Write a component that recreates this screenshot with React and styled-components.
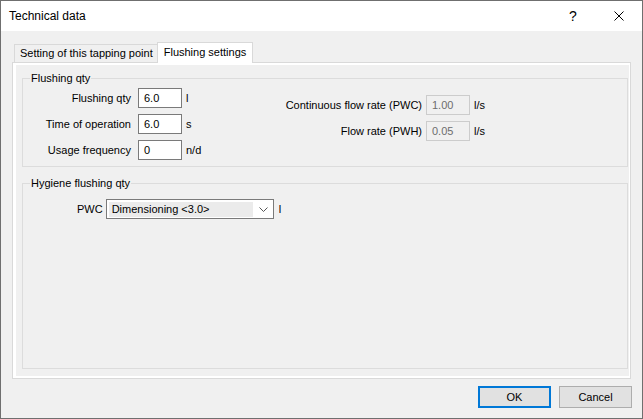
import React from "react";
import styled, { createGlobalStyle } from "styled-components";

const Global = createGlobalStyle`
  html, body { margin: 0; padding: 0; background: #f0f0f0; }
  * { box-sizing: border-box; }
`;

const Window = styled.div`
  width: 643px;
  height: 419px;
  border: 1px solid #6f6f6f;
  background: #f0f0f0;
  display: flex;
  flex-direction: column;
  font-family: "Liberation Sans", Arial, sans-serif;
  font-size: 11px;
  color: #000;
  overflow: hidden;
`;

const TitleBar = styled.div`
  height: 30px;
  flex: none;
  background: #fff;
  display: flex;
  align-items: center;
  padding-left: 8px;
`;

const Title = styled.div`
  flex: 1;
  font-size: 12px;
`;

const CaptionButton = styled.div`
  width: 46px;
  height: 30px;
  display: flex;
  align-items: center;
  justify-content: center;
  font-size: 14px;
  color: #000;
`;

const Body = styled.div`
  flex: 1;
  display: flex;
  flex-direction: column;
  padding: 11px 11px 0 11px;
`;

const TabStrip = styled.div`
  height: 20px;
  display: flex;
  align-items: flex-end;
  padding-left: 2px;
  position: relative;
  z-index: 1;
`;

const Tab = styled.div`
  height: ${(p) => (p.$active ? "21px" : "18px")};
  margin-bottom: ${(p) => (p.$active ? "-1px" : "0")};
  margin-left: ${(p) => (p.$active ? "-1px" : "0")};
  padding: ${(p) => (p.$active ? "3px 6px 0 6px" : "2px 4px 0 5px")};
  border: 1px solid #d9d9d9;
  border-bottom: none;
  background: ${(p) => (p.$active ? "#fff" : "#f0f0f0")};
  white-space: nowrap;
  line-height: 13px;
`;

const Panel = styled.div`
  height: 317px;
  border: 1px solid #d9d9d9;
  background: #fff;
  padding: 2px 1px 2px 3px;
  display: flex;
`;

const Page = styled.div`
  flex: 1;
  background: #f0f0f0;
  padding: 13px 1px 7px 6px;
  display: flex;
  flex-direction: column;
  gap: 16px;
`;

const Group = styled.div`
  position: relative;
  border: 1px solid #dcdcdc;
  height: ${(p) => (p.$h ? `${p.$h}px` : "auto")};
  flex: ${(p) => (p.$grow ? 1 : "none")};
`;

const GroupTitle = styled.div`
  position: absolute;
  top: -8px;
  left: 7px;
  padding: 0 1px;
  background: #f0f0f0;
  line-height: 14px;
`;

const FlushRow = styled.div`
  display: flex;
  align-items: flex-start;
`;

const FieldGrid = styled.div`
  display: grid;
  grid-template-columns: ${(p) => p.$cols};
  grid-auto-rows: 20px;
  row-gap: 6px;
  align-items: center;
  margin-top: ${(p) => p.$top}px;
  margin-left: ${(p) => p.$left || 0}px;
`;

const Label = styled.div`
  text-align: right;
  white-space: nowrap;
  padding-right: ${(p) => p.$gap}px;
`;

const Input = styled.div`
  width: 44px;
  height: 20px;
  border: 1px solid ${(p) => (p.$disabled ? "#cccccc" : "#7a7a7a")};
  background: ${(p) => (p.$disabled ? "#f0f0f0" : "#fff")};
  color: ${(p) => (p.$disabled ? "#6d6d6d" : "#000")};
  padding-left: 5px;
  display: flex;
  align-items: center;
`;

const Unit = styled.div`
  white-space: nowrap;
  padding-left: 4px;
`;

const ComboRow = styled.div`
  display: flex;
  align-items: center;
  margin-top: 15px;
  margin-left: 54px;
`;

const ComboLabel = styled.div`
  margin-right: 3px;
`;

const Combo = styled.div`
  width: 168px;
  height: 20px;
  border: 1px solid #7a7a7a;
  background: #fff;
  display: flex;
  align-items: center;
  padding: 2px;
`;

const ComboText = styled.div`
  flex: 1;
  height: 15px;
  background: #ebebeb;
  padding-left: 3px;
  display: flex;
  align-items: center;
  margin-right: 4px;
`;

const ComboArrow = styled.div`
  width: 14px;
  display: flex;
  align-items: center;
  justify-content: center;
`;

const ComboUnit = styled.div`
  margin-left: 5px;
`;

const ButtonRow = styled.div`
  display: flex;
  justify-content: flex-end;
  gap: 8px;
  margin-top: 7px;
  margin-right: -1px;
`;

const Button = styled.div`
  width: 73px;
  height: 22px;
  background: #e1e1e1;
  border: ${(p) => (p.$default ? "2px solid #0078d7" : "1px solid #adadad")};
  display: flex;
  align-items: center;
  justify-content: center;
`;

export default function App() {
  return (
    <>
      <Global />
      <Window>
        <TitleBar>
          <Title>Technical data</Title>
          <CaptionButton>?</CaptionButton>
          <CaptionButton>
            <svg width="10" height="10" viewBox="0 0 10 10">
              <path d="M0.5 0.5 L9.5 9.5 M9.5 0.5 L0.5 9.5" stroke="#000" strokeWidth="1" fill="none" />
            </svg>
          </CaptionButton>
        </TitleBar>
        <Body>
          <TabStrip>
            <Tab>Setting of this tapping point</Tab>
            <Tab $active>Flushing settings</Tab>
          </TabStrip>
          <Panel>
            <Page>
              <Group $h={89}>
                <GroupTitle>Flushing qty</GroupTitle>
                <FlushRow>
                  <FieldGrid $cols="115px 44px 34px" $top={9}>
                    <Label $gap={7}>Flushing qty</Label>
                    <Input>6.0</Input>
                    <Unit>l</Unit>
                    <Label $gap={7}>Time of operation</Label>
                    <Input>6.0</Input>
                    <Unit>s</Unit>
                    <Label $gap={7}>Usage frequency</Label>
                    <Input>0</Input>
                    <Unit>n/d</Unit>
                  </FieldGrid>
                  <FieldGrid $cols="144px 44px 34px" $top={16} $left={66}>
                    <Label $gap={4}>Continuous flow rate (PWC)</Label>
                    <Input $disabled>1.00</Input>
                    <Unit>l/s</Unit>
                    <Label $gap={4}>Flow rate (PWH)</Label>
                    <Input $disabled>0.05</Input>
                    <Unit>l/s</Unit>
                  </FieldGrid>
                </FlushRow>
              </Group>
              <Group $grow>
                <GroupTitle>Hygiene flushing qty</GroupTitle>
                <ComboRow>
                  <ComboLabel>PWC</ComboLabel>
                  <Combo>
                    <ComboText>Dimensioning &lt;3.0&gt;</ComboText>
                    <ComboArrow>
                      <svg width="9" height="5" viewBox="0 0 9 5">
                        <path d="M0.5 0.5 L4.5 4.5 L8.5 0.5" stroke="#555" strokeWidth="1" fill="none" />
                      </svg>
                    </ComboArrow>
                  </Combo>
                  <ComboUnit>l</ComboUnit>
                </ComboRow>
              </Group>
            </Page>
          </Panel>
          <ButtonRow>
            <Button $default>OK</Button>
            <Button>Cancel</Button>
          </ButtonRow>
        </Body>
      </Window>
    </>
  );
}
